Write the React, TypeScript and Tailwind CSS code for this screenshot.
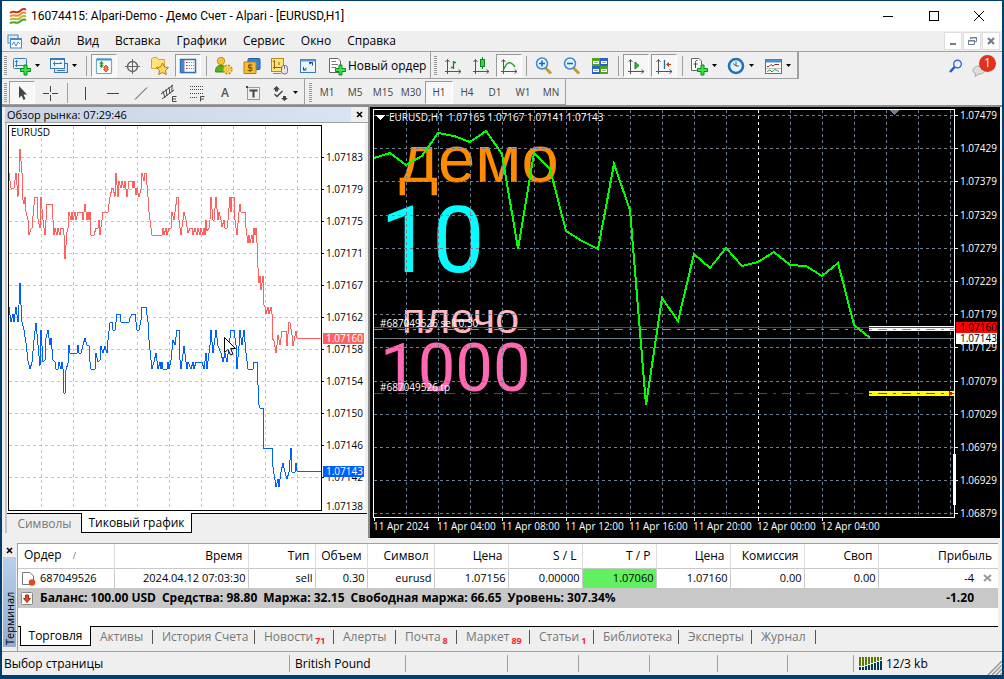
import { useState, type ReactNode } from "react";

const uiFont = "font-['Open_Sans','Noto_Sans',sans-serif]";

// close price of every hourly bar, already in chart pixels
const hourly = [
  158, 153, 165, 156, 133, 136, 142, 131, 154, 249, 153, 169, 231, 241, 249, 164,
  210, 405, 298, 321, 254, 268, 248, 266, 262, 252, 265, 266, 276, 263, 325, 338,
];

const priceGrid = [
  { y: 115, label: "1.07479" },
  { y: 148, label: "1.07429" },
  { y: 181, label: "1.07379" },
  { y: 215, label: "1.07329" },
  { y: 248, label: "1.07279" },
  { y: 281, label: "1.07229" },
  { y: 314, label: "1.07179" },
  { y: 347, label: "1.07129" },
  { y: 381, label: "1.07079" },
  { y: 414, label: "1.07029" },
  { y: 447, label: "1.06979" },
  { y: 480, label: "1.06929" },
  { y: 513, label: "1.06879" },
];

const timeLabels = [
  "11 Apr 2024",
  "11 Apr 04:00",
  "11 Apr 08:00",
  "11 Apr 12:00",
  "11 Apr 16:00",
  "11 Apr 20:00",
  "12 Apr 00:00",
  "12 Apr 04:00",
];

const tickLabels = [
  "1.07183", "1.07179", "1.07175", "1.07171", "1.07167", "1.07162",
  "1.07158", "1.07154", "1.07150", "1.07146", "1.07142",
];

const askTicks =
  "9,173 10,181 11,188 14,188 16,173 18,197 19,173 20,149 22,173 22,195 24,204 25,197 26,212 28,220 29,235 31,229 32,228 34,205 35,197 37,197 38,219 40,228 41,197 43,220 45,235 46,220 47,204 52,204 53,220 54,235 55,228 57,235 58,228 60,235 61,228 63,228 64,235 65,259 67,232 68,228 69,212 71,220 72,212 73,220 75,212 76,220 78,212 82,212 83,220 84,212 85,204 87,220 88,212 89,220 90,212 91,235 94,235 96,228 98,228 99,220 100,235 102,220 102,212 108,212 110,197 112,188 113,188 115,197 116,173 118,197 119,181 121,188 122,181 124,188 125,181 127,197 129,181 132,181 133,188 134,181 135,188 136,195 137,188 139,197 141,189 142,173 144,181 145,173 146,173 148,197 149,212 151,228 152,235 162,235 163,228 164,235 166,228 167,235 169,228 171,228 172,212 174,220 177,197 178,197 179,220 181,235 184,212 186,220 188,233 190,228 192,228 193,235 195,228 197,235 198,228 200,235 201,228 203,235 204,228 205,235 206,220 207,231 209,228 210,220 211,197 213,220 214,220 216,197 218,220 219,212 221,220 222,227 224,220 225,228 227,228 228,220 230,197 231,212 232,197 234,197 235,220 237,235 239,212 240,204 241,212 245,212 246,228 248,243 249,235 250,243 252,235 253,243 254,228 255,235 256,228 257,243 258,268 259,283 260,276 261,290 263,276 264,305 265,307 266,314 268,307 269,314 271,307 272,314 272,338 274,341 276,353 277,345 278,335 280,345 282,331 286,331 287,346 289,322 290,323 292,335 293,346 296,331 297,338 321,338";

const bidTicks =
  "9,307 11,322 13,314 14,322 16,307 18,322 19,305 20,283 21,305 22,322 24,330 26,343 28,361 30,369 32,362 34,340 36,323 38,345 40,366 41,330 43,362 45,360 46,338 48,330 50,345 51,338 53,360 55,362 56,369 58,369 59,362 61,369 62,362 63,369 64,393 65,393 66,370 68,363 69,345 70,353 77,353 78,345 79,353 81,353 83,345 85,338 87,345 89,346 90,362 91,369 95,369 96,353 98,362 100,360 101,346 103,353 105,346 107,353 108,340 110,323 112,322 113,330 115,330 117,314 120,314 121,322 129,322 130,318 132,314 135,314 136,322 137,330 139,330 141,320 142,307 146,307 148,322 149,340 151,360 152,369 154,362 156,353 158,369 160,362 161,369 162,362 163,369 167,369 168,362 169,369 171,360 173,340 175,345 177,330 179,330 180,360 181,369 184,346 186,362 187,369 188,362 191,369 193,362 194,369 196,362 202,362 204,369 206,353 207,369 210,345 211,330 213,353 216,330 218,346 221,353 223,362 225,353 227,362 229,346 231,330 234,330 236,345 237,369 239,346 240,330 242,345 244,330 246,353 248,369 253,369 254,362 257,362 258,385 259,405 260,408 263,408 264,448 272,448 273,467 275,480 276,487 278,479 279,487 281,472 283,463 285,472 287,479 289,472 291,448 292,472 295,472 296,463 297,471 321,471";

// ---------- small building blocks ----------

function Icon({ children, size = 20 }: { children: ReactNode; size?: number }) {
  return (
    <svg width={size} height={size} viewBox={`0 0 ${size} ${size}`} className="shrink-0">
      {children}
    </svg>
  );
}

function Grip() {
  return (
    <svg width="3" height="20" shapeRendering="crispEdges" className="shrink-0">
      <path d="M1.500 0V20" stroke="#999" strokeWidth="3" strokeDasharray="1 1" />
    </svg>
  );
}

function Sep({ wide = false }: { wide?: boolean }) {
  return (
    <div className={wide ? "flex w-2 justify-center" : "flex w-[7px] justify-center"}>
      <div className="h-5 w-px bg-[#a0a0a0]" />
    </div>
  );
}

function ToolButton({ label, pressed = false, children }: { label: string; pressed?: boolean; children: ReactNode }) {
  return (
    <button type="button" aria-label={label} aria-pressed={pressed} className="flex w-7 shrink-0 items-center justify-center">
      <span
        className={
          pressed
            ? "flex h-[23px] w-[26px] items-center justify-center border border-[#fff] border-t-[#999] border-l-[#999] bg-[#f7f7f7]"
            : "flex h-[23px] w-[26px] items-center justify-center"
        }
      >
        {children}
      </span>
    </button>
  );
}

function DropButton({ label, children }: { label: string; children: ReactNode }) {
  return (
    <button type="button" aria-label={label} className="flex w-[37px] shrink-0 items-center gap-[3px] pl-[3px]">
      {children}
      <svg width="5" height="3" className="shrink-0">
        <path d="M0 0H5L2.500 3Z" fill="#000" />
      </svg>
    </button>
  );
}

const axes = <path d="M4.500 4V18M2 15.500H18M2.500 6L4.500 3.500 6.500 6M15.500 13.500L18 15.500 15.500 17.500" fill="none" stroke="#555" />;

const greenPlus = (
  <path d="M12 9H15V12.500H18.500V15.500H15V19H12V15.500H8.500V12.500H12Z" fill="#3fe24f" stroke="#078a16" />
);

// ---------- toolbars ----------

function StandardToolbar() {
  return (
    <div className="flex h-[27px] items-stretch justify-between">
      <div className="flex border-r-2 border-b border-[#a0a0a0]">
        <div className="flex items-center border-r border-[#a0a0a0] pt-px pl-[2px]">
          <Grip />
          <div className="w-[2px]" />
          <DropButton label="Новый график">
            <Icon>
              <rect x="1.500" y="2.500" width="13" height="10" rx="1" fill="#e3f0fa" stroke="#3c78b4" />
              <path d="M4.500 4V11M3 9.500H12M3 6L4.500 4.500 6 6" fill="none" stroke="#3c78b4" />
              {greenPlus}
            </Icon>
          </DropButton>
          <DropButton label="Профили">
            <Icon>
              <rect x="5.500" y="7.500" width="13" height="9" fill="#d8e9f7" stroke="#3c78b4" />
              <rect x="1.500" y="2.500" width="14" height="10" fill="#eef6fc" stroke="#3c78b4" />
              <path d="M1.500 3.500H15.500" stroke="#3c78b4" />
              <path d="M4 7.500H13M5.500 5.500V10M8 14.500H16M11 6.500L13 7.500" fill="none" stroke="#3c78b4" />
            </Icon>
          </DropButton>
          <Sep />
          <ToolButton label="Обзор рынка" pressed>
            <Icon>
              <rect x="2.500" y="3" width="15" height="14.500" rx="1" fill="#fff" stroke="#6aa7dc" strokeWidth="1.200" />
              <path d="M2.500 3.500H17.500" stroke="#4a90cf" strokeWidth="2" />
              <path d="M7.500 5L10 7.500H8.500V9.500H10L7.500 12 5 9.500H6.500V7.500H5Z" fill="#1d9a2a" />
              <path d="M12 9L14.500 11.500H13.500V13.500H14.500L12 16 9.500 13.500H10.500V11.500H9.500Z" fill="#ff7a3a" stroke="#d0421a" strokeWidth="0.800" />
            </Icon>
          </ToolButton>
          <ToolButton label="Окно данных">
            <Icon>
              <circle cx="10.500" cy="10.500" r="5" fill="none" stroke="#666" strokeWidth="1.400" />
              <path d="M10.500 3V18M3 10.500H18" stroke="#666" />
            </Icon>
          </ToolButton>
          <ToolButton label="Навигатор">
            <Icon>
              <path d="M1.500 12.500V3L3 1.500H7L8.500 3.500H14.500V12.500Z" fill="#ffe27a" stroke="#d6a52a" />
              <path d="M12.500 7L14.500 11 18.500 11.500 15.500 14.500 16.300 18.500 12.500 16.500 8.700 18.500 9.500 14.500 6.500 11.500 10.500 11Z" fill="#ffd65a" stroke="#b07a1c" />
            </Icon>
          </ToolButton>
          <ToolButton label="Терминал" pressed>
            <Icon>
              <rect x="2.500" y="3.500" width="15" height="13" fill="#fff" stroke="#2f6fb3" strokeWidth="1.500" />
              <rect x="3" y="4" width="3.500" height="12" fill="#4a86c6" />
              <path d="M8 6.500H9M8 9.500H9M8 12.500H9" stroke="#d22" />
              <path d="M9 6.500H16M9 9.500H16M9 12.500H16" stroke="#888" strokeDasharray="1 1" />
            </Icon>
          </ToolButton>
          <Sep wide />
          <ToolButton label="Тестер стратегий">
            <Icon>
              <circle cx="7" cy="5" r="3.700" fill="#f4c531" stroke="#c6911b" />
              <path d="M1.500 16C1.500 11 3.500 9.500 7 9.500S12.500 11 12.500 16Z" fill="#4cb81d" stroke="#2d8a10" />
              <circle cx="13.500" cy="13.500" r="4.200" fill="#ffe04a" stroke="#c7901d" strokeWidth="1.800" strokeDasharray="2 1.300" />
              <circle cx="13.500" cy="13.500" r="1.500" fill="#fff" stroke="#c7901d" />
            </Icon>
          </ToolButton>
          <ToolButton label="Счета">
            <Icon>
              <rect x="6" y="2.500" width="12" height="11" rx="1" fill="#2e86d8" stroke="#1d5fa6" />
              <path d="M2 6H14V17.500H2Z" fill="#f6bd3a" stroke="#b27a12" />
              <path d="M10.500 9H6.500V11.700H10V14.500H5.500M8 7.500V16" fill="none" stroke="#7d5307" />
            </Icon>
          </ToolButton>
          <ToolButton label="Журнал">
            <Icon>
              <rect x="1.500" y="2.500" width="12" height="13" fill="#ffe27a" stroke="#b98a20" />
              <path d="M4.500 4V13M3 11.500H12M3 6L4.500 4.500M9 6V9" fill="none" stroke="#8a6410" />
              <rect x="11.500" y="9.500" width="6" height="8.500" rx="2.500" fill="#e5e5e5" stroke="#777" />
              <path d="M14.500 10V13M3 17.500H11" stroke="#888" />
            </Icon>
          </ToolButton>
          <ToolButton label="Полный экран">
            <Icon>
              <rect x="2.500" y="3.500" width="15" height="13" fill="#eaf4fc" stroke="#3c78b4" />
              <path d="M2.500 4.500H17.500" stroke="#5b9bd5" strokeWidth="2" />
              <path d="M11 8L14.500 6.500V9.500M8.500 12L5.500 14V11M5.500 14H8.500M11 6.500H14.500" fill="none" stroke="#1a4f8c" />
            </Icon>
          </ToolButton>
          <button type="button" className="flex items-center gap-[1px] pr-[7px] pl-[5px] text-[12px]">
            <Icon>
              <path d="M2.500 2.500H11L13.500 5V16.500H2.500Z" fill="#fff" stroke="#666" />
              <path d="M4.500 5.500H9M4.500 8.500H11M4.500 11.500H9" stroke="#777" />
              {greenPlus}
            </Icon>
            <span className="w-[75px] text-left whitespace-nowrap">Новый ордер</span>
          </button>
        </div>
        <div className="flex items-center pt-px pl-[3px]">
          <Grip />
          <div className="w-[2px]" />
          <ToolButton label="Бары">
            <Icon>
              {axes}
              <path d="M10.500 5V13M8 11.500H10.500M10.500 6.500H13" fill="none" stroke="#0a8a1a" strokeWidth="1.300" />
            </Icon>
          </ToolButton>
          <ToolButton label="Свечи">
            <Icon>
              {axes}
              <path d="M11.500 1V13" stroke="#0a8a1a" />
              <rect x="9.500" y="3.500" width="4" height="7" fill="#35d24b" stroke="#0a8a1a" />
            </Icon>
          </ToolButton>
          <ToolButton label="Линия" pressed>
            <Icon>
              {axes}
              <path d="M5 13C8 5 12 5 16 11" fill="none" stroke="#2ca33a" strokeWidth="1.400" />
            </Icon>
          </ToolButton>
          <Sep />
          <ToolButton label="Увеличить">
            <Icon>
              <path d="M11.500 12L17 17.500" stroke="#c9982a" strokeWidth="3" />
              <circle cx="8" cy="7.500" r="5.500" fill="#e6f4ff" stroke="#3b8ad6" strokeWidth="1.500" />
              <path d="M5 7.500H11M8 4.500V10.500" stroke="#1f66a8" strokeWidth="1.600" />
            </Icon>
          </ToolButton>
          <ToolButton label="Уменьшить">
            <Icon>
              <path d="M11.500 12L17 17.500" stroke="#c9982a" strokeWidth="3" />
              <circle cx="8" cy="7.500" r="5.500" fill="#e6f4ff" stroke="#3b8ad6" strokeWidth="1.500" />
              <path d="M5 7.500H11" stroke="#1f66a8" strokeWidth="1.600" />
            </Icon>
          </ToolButton>
          <ToolButton label="Окна мозаикой">
            <Icon>
              <rect x="2" y="2" width="8" height="8" fill="#4ca51c" />
              <rect x="10" y="2" width="8" height="8" fill="#2a5fd0" />
              <rect x="2" y="10" width="8" height="8" fill="#2a5fd0" />
              <rect x="10" y="10" width="8" height="8" fill="#4ca51c" />
              <path d="M3 6.500H9M11 6.500H17M3 14.500H9M11 14.500H17" stroke="#fff" strokeWidth="3" />
              <path d="M4 6.500H8M12 6.500H16M4 14.500H8M12 14.500H16" stroke="#9aa" />
            </Icon>
          </ToolButton>
          <Sep wide />
          <ToolButton label="Автопрокрутка" pressed>
            <Icon>
              {axes}
              <path d="M9 6V13L13 9.500Z" fill="#2cb83e" stroke="#0a8a1a" />
            </Icon>
          </ToolButton>
          <ToolButton label="Сдвиг графика" pressed>
            <Icon>
              {axes}
              <path d="M10.500 4V13" stroke="#1e6aa8" strokeWidth="1.300" />
              <path d="M12 8.500L15 6V8H17V9H15V11Z" fill="#c63a10" />
            </Icon>
          </ToolButton>
          <Sep wide />
          <DropButton label="Индикаторы">
            <Icon>
              <path d="M2.500 2.500H10L12.500 5V14.500H2.500Z" fill="#fff" stroke="#666" />
              <path d="M8.500 4.500C6 4 6.500 6 6.500 8V12M4.500 8H8.500" fill="none" stroke="#444" />
              {greenPlus}
            </Icon>
          </DropButton>
          <DropButton label="Периоды">
            <Icon>
              <circle cx="10" cy="10" r="7" fill="#e8f3fc" stroke="#1d72c4" strokeWidth="2.600" />
              <path d="M10 5.500V10H13M7 7.500L10 10" fill="none" stroke="#555" />
            </Icon>
          </DropButton>
          <DropButton label="Шаблоны">
            <Icon>
              <rect x="2.500" y="3.500" width="16" height="14" fill="#fff" stroke="#3c78b4" />
              <path d="M3 5H18" stroke="#4a90cf" strokeWidth="3" />
              <path d="M4 10.500H6L8 8.500 10 10 12 8.500H16" fill="none" stroke="#9c2a12" />
              <path d="M3 12.500H18" stroke="#bbb" />
              <path d="M4 15.500L7 14 9 16 12 13.500 16 15.500" fill="none" stroke="#2b9a3a" />
            </Icon>
          </DropButton>
        </div>
      </div>
      <div className="flex items-center gap-2 pr-[6px]">
        <button type="button" aria-label="Поиск">
          <Icon size={16}>
            <path d="M2 14L7 8.500" stroke="#2a55c8" strokeWidth="2.400" />
            <circle cx="9.500" cy="6" r="3.800" fill="#eaf3ff" stroke="#3a68d8" strokeWidth="1.400" />
          </Icon>
        </button>
        <button type="button" aria-label="Сообщения" className="relative h-[22px] w-6">
          <svg width="14" height="12" className="absolute bottom-0 left-0">
            <path d="M7 1C11 1 13 3 13 5S11 9 7 9L3 11.500 3.500 8.500C1 7.500 1 6 1 5S3 1 7 1Z" fill="#ddd" stroke="#aaa" />
          </svg>
          <span className="absolute top-0 right-0 flex size-[17px] items-center justify-center rounded-full bg-[#e0321c] text-[12px] text-white">
            1
          </span>
        </button>
      </div>
    </div>
  );
}

const periods = ["M1", "M5", "M15", "M30", "H1", "H4", "D1", "W1", "MN"];

function LineToolbar() {
  const [period, setPeriod] = useState("H1");

  return (
    <div className="flex h-[26px]">
      <div className="flex border-b border-[#a0a0a0]">
        <div className="flex items-center border-r border-[#a0a0a0] pt-[2px] pl-[2px]">
          <Grip />
          <div className="w-px" />
          <ToolButton label="Курсор" pressed>
            <Icon>
              <path d="M7 3V15L9.500 12.500 11.500 17 13.500 16 11.500 11.500H15Z" fill="#444" />
            </Icon>
          </ToolButton>
          <ToolButton label="Перекрестие">
            <Icon>
              <path d="M10.500 3V9M10.500 12V18M3 10.500H9M12 10.500H18" stroke="#444" />
            </Icon>
          </ToolButton>
          <Sep />
          <ToolButton label="Вертикальная линия">
            <Icon>
              <path d="M10.500 4V17" stroke="#444" />
            </Icon>
          </ToolButton>
          <ToolButton label="Горизонтальная линия">
            <Icon>
              <path d="M4 10.500H16" stroke="#444" />
            </Icon>
          </ToolButton>
          <ToolButton label="Трендовая линия">
            <Icon>
              <path d="M4 16.500L16 4.500" stroke="#444" />
            </Icon>
          </ToolButton>
          <ToolButton label="Канал">
            <Icon>
              <path d="M2 11L14 2M3 16L15 7M4 8L6 15M7 6L8 13M10 4L11 11M13 2V9" stroke="#444" />
              <path d="M17.500 13.500H13.500V18.500H17.500M13.500 16H17" fill="none" stroke="#444" />
            </Icon>
          </ToolButton>
          <ToolButton label="Уровни Фибоначчи">
            <Icon>
              <path d="M3 3.500H17M3 6.500H17M3 10.500H17M3 14.500H11" stroke="#444" strokeDasharray="1 1" />
              <path d="M17.500 13.500H13.500V18.500M13.500 16H17" fill="none" stroke="#444" />
            </Icon>
          </ToolButton>
          <ToolButton label="Текст">
            <span className="text-[12px] font-semibold text-[#555]">A</span>
          </ToolButton>
          <ToolButton label="Метка">
            <Icon>
              <rect x="4.500" y="4.500" width="12" height="12" fill="none" stroke="#444" strokeDasharray="1 1" />
              <path d="M6.500 7.500H14.500M10.500 7.500V14.500" stroke="#444" strokeWidth="2" />
              <path d="M3 3H5V5H3Z" fill="#444" />
            </Icon>
          </ToolButton>
          <DropButton label="Стрелки">
            <Icon>
              <path d="M3 6.500L6.500 3 10 6.500H8V8.500H5V6.500Z M11 15H13V13H16V15H18L14.500 18Z" fill="#444" />
              <path d="M4.500 11L7 13.500 12.500 8" fill="none" stroke="#444" strokeWidth="1.400" />
            </Icon>
          </DropButton>
        </div>
        <div className="flex items-center border-r border-[#a0a0a0] pt-[2px] pl-[4px]">
          <Grip />
          <div className="w-px" />
          {periods.map((p) => (
            <button
              key={p}
              type="button"
              onClick={() => setPeriod(p)}
              className={
                p === period
                  ? "h-[23px] w-7 border border-[#fff] border-t-[#999] border-l-[#999] bg-[#f7f7f7] text-[10px] text-[#444]"
                  : "h-[23px] w-7 text-[10px] text-[#444]"
              }
            >
              {p}
            </button>
          ))}
        </div>
      </div>
    </div>
  );
}

// ---------- market watch ----------

function MarketWatch() {
  return (
    <section className="flex w-[368px] shrink-0 flex-col border-r-2 border-[#8c8c8c] pl-[3px]">
      <div className="flex h-4 items-center border-b border-[#a0a0a0]">
        <h2 className="w-[346px] bg-linear-to-r from-[#c8d4e2] to-[#d8e4f1] pl-[2px] text-[11px] leading-[15px]">
          Обзор рынка: 07:29:46
        </h2>
        <button type="button" aria-label="Закрыть обзор рынка" className="flex flex-1 justify-center">
          <svg width="7" height="7">
            <path d="M1 1L6 6M6 1L1 6" stroke="#000" strokeWidth="1.600" />
          </svg>
        </button>
      </div>
      <div className="mr-[1px] border-l-2 border-[#c4c4c4]">
        <svg viewBox="7 123 358 390" className="block w-[358px] bg-white text-[10px]" shapeRendering="crispEdges">
          <g stroke="#c4c4c4" strokeDasharray="3 3">
            {tickLabels.map((t, i) => (
              <path key={t} d={`M9 ${157.5 + i * 32}H321`} />
            ))}
            {Array.from({ length: 9 }, (_, i) => (
              <path key={i} d={`M${41.5 + i * 32} 126V510`} />
            ))}
          </g>
          <polyline points={askTicks} fill="none" stroke="#ff6060" />
          <polyline points={bidTicks} fill="none" stroke="#005fff" />
          <rect x="8.500" y="125.500" width="313" height="385" fill="none" stroke="#000" />
          <text x="11" y="136">EURUSD</text>
          {tickLabels.map((t, i) => (
            <g key={t}>
              <path d={`M322 ${157.5 + i * 32}h2`} stroke="#000" />
              <text x="326" y={161 + i * 32}>{t}</text>
            </g>
          ))}
          <text x="326" y="510">1.07138</text>
          <rect x="323" y="333" width="41" height="11" fill="#ff6060" />
          <rect x="323" y="466" width="41" height="11" fill="#005fff" />
          <g fill="#fff">
            <text x="326" y="342">1.07160</text>
            <text x="326" y="475">1.07143</text>
          </g>
          {/* mouse pointer */}
          <path
            d="M224.500 337.500V352.500L228 349.500 230.500 355 233 354 230.500 348.500H235.500Z"
            fill="#fff"
            stroke="#000"
            shapeRendering="auto"
          />
        </svg>
        <div className="flex h-5 bg-[#efefef] text-[12px] leading-[18px]">
          <button type="button" className="w-[74px] border-t border-black pl-[1px] text-[#777]">
            Символы
          </button>
          <button type="button" className="w-[111px] border-x border-b border-black bg-white">
            Тиковый график
          </button>
          <div className="flex-1 border-t border-black" />
        </div>
      </div>
    </section>
  );
}

// ---------- hourly chart ----------

function HourlyChart() {
  return (
    <section className="min-w-0 flex-1">
      <svg viewBox="370 107 630 431" className="block w-full bg-black text-[10px]" shapeRendering="crispEdges">
        <g fontFamily="'Liberation Sans', Arial, sans-serif">
          <text x="399" y="182" fontSize="67" fill="#ff8c00">демо</text>
          <text x="402" y="333" fontSize="43" fill="#ffb6c1">плечо</text>
        </g>
        <g fontFamily="Roboto, sans-serif">
          <text x="380" y="272" fontSize="93" fill="#00ffff">10</text>
          <text x="380" y="391" fontSize="67" fill="#ff69b4">1000</text>
        </g>
        <g strokeDasharray="3 3">
          {priceGrid.map((p) => (
            <path key={p.label} d={`M374 ${p.y + 0.5}H954`} stroke="#708090" />
          ))}
          {Array.from({ length: 18 }, (_, i) => (
            <path key={i} d={`M${406.5 + i * 32} 110V517`} stroke={i === 11 ? "#fff" : "#708090"} />
          ))}
        </g>
        <path d="M374 338.500H954" stroke="#708090" />
        <path d="M869 328.500H954" stroke="#fff" strokeWidth="5" />
        <path d="M869 393.500H954" stroke="#ff0" strokeWidth="5" />
        <path d="M374 327.500H954" stroke="#f00" />
        <path d="M374 329.500H954" stroke="#32cd32" strokeDasharray="9 6 3 6" />
        <path d="M374 393.500H954" stroke="#f00" strokeDasharray="9 6 3 6" />
        <path d="M949 390.500L953 393.500 949 396.500Z" fill="#f00" />
        <polyline
          points={hourly.map((y, i) => `${374 + i * 16},${y}`).join(" ")}
          fill="none"
          stroke="#00ff00"
          strokeWidth="2"
        />
        <path d="M373.500 517.500V109.500H954.500V517.500Z" fill="none" stroke="#fff" />
        <path d="M954.500 454V505" stroke="#fff" strokeWidth="3" />
        <path d="M889 110H900L894.500 115Z" fill="#708090" />
        <path d="M376 115H385L380.500 120Z" fill="#fff" />
        <g fill="#fff">
          <text x="389" y="121">EURUSD,H1</text>
          <text x="448" y="121">1.07165 1.07167 1.07141 1.07143</text>
          <text x="380" y="327">#687049526 sell 0.30</text>
          <text x="380" y="391">#687049526 tp</text>
          {priceGrid.map((p) => (
            <g key={p.label}>
              <path d={`M955 ${p.y + 0.5}h3`} stroke="#fff" />
              <text x="960" y={p.y + 4}>{p.label}</text>
            </g>
          ))}
          {timeLabels.map((t, i) => (
            <g key={t}>
              <path d={`M${374.5 + i * 64} 518v3`} stroke="#fff" />
              <text x={373 + i * 64} y="530">{t}</text>
            </g>
          ))}
        </g>
        <rect x="956" y="322" width="41" height="11" fill="#f00" />
        <rect x="956" y="333" width="41" height="11" fill="#fff" />
        <text x="960" y="331">1.07160</text>
        <text x="960" y="342">1.07143</text>
      </svg>
    </section>
  );
}

// ---------- terminal ----------

const columns = [
  { title: "Время", value: "2024.04.12 07:03:30" },
  { title: "Тип", value: "sell" },
  { title: "Объем", value: "0.30" },
  { title: "Символ", value: "eurusd" },
  { title: "Цена", value: "1.07156" },
  { title: "S / L", value: "0.00000" },
  { title: "T / P", value: "1.07060" },
  { title: "Цена", value: "1.07160" },
  { title: "Комиссия", value: "0.00" },
  { title: "Своп", value: "0.00" },
];

const terminalTabs = [
  { name: "Активы", width: "w-[62px]" },
  { name: "История Счета", width: "w-[102px]" },
  { name: "Новости", width: "w-[79px]", count: 71 },
  { name: "Алерты", width: "w-[62px]" },
  { name: "Почта", width: "w-[61px]", count: 8 },
  { name: "Маркет", width: "w-[73px]", count: 89 },
  { name: "Статьи", width: "w-[64px]", count: 1 },
  { name: "Библиотека", width: "w-[85px]" },
  { name: "Эксперты", width: "w-[73px]" },
  { name: "Журнал", width: "w-[64px]" },
];

function OrdersTable() {
  return (
    <table className="w-full table-fixed border-collapse bg-white text-right">
      <colgroup>
        <col className="w-24" />
        <col className="w-[134px]" />
        <col className="w-[67px]" />
        <col className="w-[52px]" />
        <col className="w-[67px]" />
        <col className="w-[74px]" />
        <col className="w-[74px]" />
        <col className="w-[74px]" />
        <col className="w-[74px]" />
        <col className="w-[74px]" />
        <col className="w-[74px]" />
        <col />
      </colgroup>
      <thead>
        <tr className="h-6 border-b border-[#c8c8c8] text-[12px] leading-4">
          <th className="border-r border-[#ddd] pl-[6px] text-left font-normal">
            Ордер <span className="pl-2 text-[9px] text-[#777]">/</span>
          </th>
          {columns.map((c, i) => (
            <th key={i} className="border-r border-[#ddd] pr-[5px] font-normal">
              {c.title}
            </th>
          ))}
          <th className="pr-[6px] font-normal">Прибыль</th>
        </tr>
      </thead>
      <tbody>
        <tr className="h-5 text-[11px] leading-4">
          <td className="border-r border-[#c8c8c8] pl-[3px]">
            <div className="flex items-center gap-1">
              <Icon size={15}>
                <path d="M1.500 1.500H9L12.500 5V13.500H1.500Z" fill="#fff" stroke="#777" />
                <circle cx="11" cy="11.500" r="3.200" fill="#e04a1c" />
              </Icon>
              687049526
            </div>
          </td>
          {columns.map((c, i) => (
            <td
              key={i}
              className={
                c.title === "T / P"
                  ? "border-r border-[#c8c8c8] bg-[#60f060] pr-[2px]"
                  : "border-r border-[#c8c8c8] pr-[2px]"
              }
            >
              {c.value}
            </td>
          ))}
          <td>
            <div className="flex items-center justify-end gap-[9px] pr-[6px]">
              -4
              <button type="button" aria-label="Закрыть ордер">
                <svg width="9" height="8" className="block">
                  <path d="M1 1L8 7M8 1L1 7" stroke="#999" strokeWidth="2" />
                </svg>
              </button>
            </div>
          </td>
        </tr>
        <tr className="h-5 bg-[#c8c8c8] text-[12px] leading-4 font-bold">
          <td colSpan={11} className="pl-[3px]">
            <div className="flex items-center gap-[6px]">
              <Icon size={13}>
                <rect x="0.500" y="0.500" width="11" height="12" rx="1" fill="#fff" stroke="#888" />
                <path d="M6 10.500L2.500 6.500H4.500V3H7.500V6.500H9.500Z" fill="#e04a1c" stroke="#a82c08" />
              </Icon>
              <span>Баланс: 100.00 USD</span>
              <span>Средства: 98.80</span>
              <span>Маржа: 32.15</span>
              <span>Свободная маржа: 66.65</span>
              <span>Уровень: 307.34%</span>
            </div>
          </td>
          <td className="pr-6">-1.20</td>
        </tr>
      </tbody>
    </table>
  );
}

function Terminal() {
  return (
    <section className="mt-[5px] flex">
      <div className="flex w-[15px] shrink-0 flex-col items-center">
        <button type="button" aria-label="Закрыть терминал" className="flex h-[14px] items-center">
          <svg width="7" height="7">
            <path d="M1 1L6 6M6 1L1 6" stroke="#000" strokeWidth="1.600" />
          </svg>
        </button>
        <h2 className="mb-1 w-[13px] flex-1 rotate-180 bg-linear-to-t from-[#b9d0ea] to-[#93acd0] pt-[2px] text-[11px] leading-[13px] [writing-mode:vertical-rl]">
          Терминал
        </h2>
      </div>
      <div className="mr-[4px] min-w-0 flex-1 border-t border-l border-[#a0a0a0] bg-white">
        <OrdersTable />
        <div className="h-[18px]" />
        <div className="flex h-[25px] items-start bg-[#efefef] text-[12px]">
          <div className="w-[2px] border-t border-black" />
          <button type="button" className="h-5 w-[71px] border-x border-b border-black bg-white leading-[18px]">
            Торговля
          </button>
          <div className="flex h-5 flex-1 items-center border-t border-black">
            {terminalTabs.map((t) => (
              <button
                key={t.name}
                type="button"
                className={`${t.width} flex h-[14px] items-center gap-[2px] border-r border-[#555] pl-[9px] text-left whitespace-nowrap text-[#777]`}
              >
                {t.name}
                {t.count && <span className="pt-2 text-[9px] leading-3 font-bold text-[#f22]">{t.count}</span>}
              </button>
            ))}
          </div>
        </div>
      </div>
    </section>
  );
}

function StatusBar() {
  return (
    <footer className="flex h-6 items-stretch border-t border-[#a0a0a0] text-[12px] leading-[17px]">
      <div className="flex flex-1 items-stretch py-[3px]">
        <div className="w-72 border-r border-[#a0a0a0] pl-[2px]">Выбор страницы</div>
        <div className="w-[116px] border-r border-[#a0a0a0] pl-[5px]">British Pound</div>
        <div className="w-[102px] border-r border-[#a0a0a0]" />
        <div className="w-[71px] border-r border-[#a0a0a0]" />
        <div className="w-[71px] border-r border-[#a0a0a0]" />
        <div className="w-[68px] border-r border-[#a0a0a0]" />
        <div className="w-[70px] border-r border-[#a0a0a0]" />
        <div className="w-[66px] border-r border-[#a0a0a0]" />
        <div className="flex gap-1 pl-[5px]">
          <svg width="23" height="13" shapeRendering="crispEdges" className="mt-[2px]">
            {[9, 9, 8, 7, 6, 5, 4, 3].map((h, i) => (
              <g key={i}>
                <rect x={i * 3} y="0" width="2" height={h} fill="#5c7a00" />
                <rect x={i * 3} y={h + 1} width="2" height={12 - h} fill="#00395c" />
              </g>
            ))}
          </svg>
          12/3 kb
        </div>
      </div>
      <svg width="15" height="15" className="self-end">
        <path d="M1 15L15 1M5 15L15 5M9 15L15 9M13 15L15 13" stroke="#999" strokeWidth="1.500" />
      </svg>
    </footer>
  );
}

// ---------- window ----------

const menu = ["Файл", "Вид", "Вставка", "Графики", "Сервис", "Окно", "Справка"];

export default function App() {
  return (
    <div className={`min-h-screen bg-[#00406f] px-[2px] pt-px pb-1 text-black ${uiFont}`}>
      <main className="bg-[#efefef]">
        <header className="flex h-[30px] items-center justify-between bg-white pl-[7px]">
          <div className="flex items-center gap-1">
            <Icon size={18}>
              <path d="M1 6C5 2 7 8 11 4S15 3 17 2" fill="none" stroke="#c8321e" strokeWidth="2" />
              <path d="M1 9.500C5 5.500 7 11.500 11 7.500S15 6.500 17 5.500" fill="none" stroke="#e8912a" strokeWidth="2" />
              <path d="M1 13C5 9 7 15 11 11S15 10 17 9" fill="none" stroke="#c3b52c" strokeWidth="2" />
              <path d="M1 16.500C5 12.500 7 18.500 11 14.500S15 13.500 17 12.500" fill="none" stroke="#46a52c" strokeWidth="2" />
            </Icon>
            <h1 className="font-['Roboto',sans-serif] text-[12px]">16074415: Alpari-Demo - Демо Счет - Alpari - [EURUSD,H1]</h1>
          </div>
          <div className="flex">
            <button type="button" aria-label="Свернуть" className="flex w-[46px] justify-center">
              <Icon size={12}>
                <path d="M1 6.500H11" stroke="#000" />
              </Icon>
            </button>
            <button type="button" aria-label="Развернуть" className="flex w-[45px] justify-center">
              <Icon size={12}>
                <rect x="1.500" y="1.500" width="9" height="9" fill="none" stroke="#000" />
              </Icon>
            </button>
            <button type="button" aria-label="Закрыть" className="flex w-[46px] justify-center">
              <Icon size={12}>
                <path d="M1 1L11 11M11 1L1 11" stroke="#000" />
              </Icon>
            </button>
          </div>
        </header>

        <nav className="flex h-[21px] items-center justify-between border-b border-[#a0a0a0] pr-[2px] pl-[5px]">
          <div className="flex items-center gap-2 text-[12px]">
            <Icon size={15}>
              <rect x="1" y="1" width="10" height="8" fill="#dcecf9" stroke="#4a8ac8" />
              <rect x="3.500" y="4.500" width="11" height="9.500" fill="#fff" stroke="#4a8ac8" />
              <path d="M3.500 5.500H14.500" stroke="#4a8ac8" />
              <path d="M5 11L7 8 9 12 11 8 13 10" fill="none" stroke="#4a8ac8" />
            </Icon>
            <div className="flex gap-4">
              {menu.map((m) => (
                <button key={m} type="button">
                  {m}
                </button>
              ))}
            </div>
          </div>
          <div className="flex gap-px">
            <button type="button" aria-label="Свернуть график" className="border border-[#ddd] bg-white">
              <Icon size={16}>
                <path d="M5 11H11" stroke="#6f7f8f" strokeWidth="2" />
              </Icon>
            </button>
            <button type="button" aria-label="Восстановить график" className="border border-[#ddd] bg-white">
              <Icon size={16}>
                <path d="M6.500 6V4.500H12.500V8.500H11M4.500 7.500H10.500V11.500H4.500ZM6 5H13M4 8H11" fill="none" stroke="#6f7f8f" />
              </Icon>
            </button>
            <button type="button" aria-label="Закрыть график" className="border border-[#ddd] bg-white">
              <Icon size={16}>
                <path d="M5 5L11 11M11 5L5 11" stroke="#6f7f8f" strokeWidth="2.200" />
              </Icon>
            </button>
          </div>
        </nav>

        <StandardToolbar />
        <LineToolbar />

        <div className="flex border-t-2 border-[#8c8c8c] pr-[2px]">
          <MarketWatch />
          <HourlyChart />
        </div>

        <Terminal />
        <StatusBar />
      </main>
    </div>
  );
}
